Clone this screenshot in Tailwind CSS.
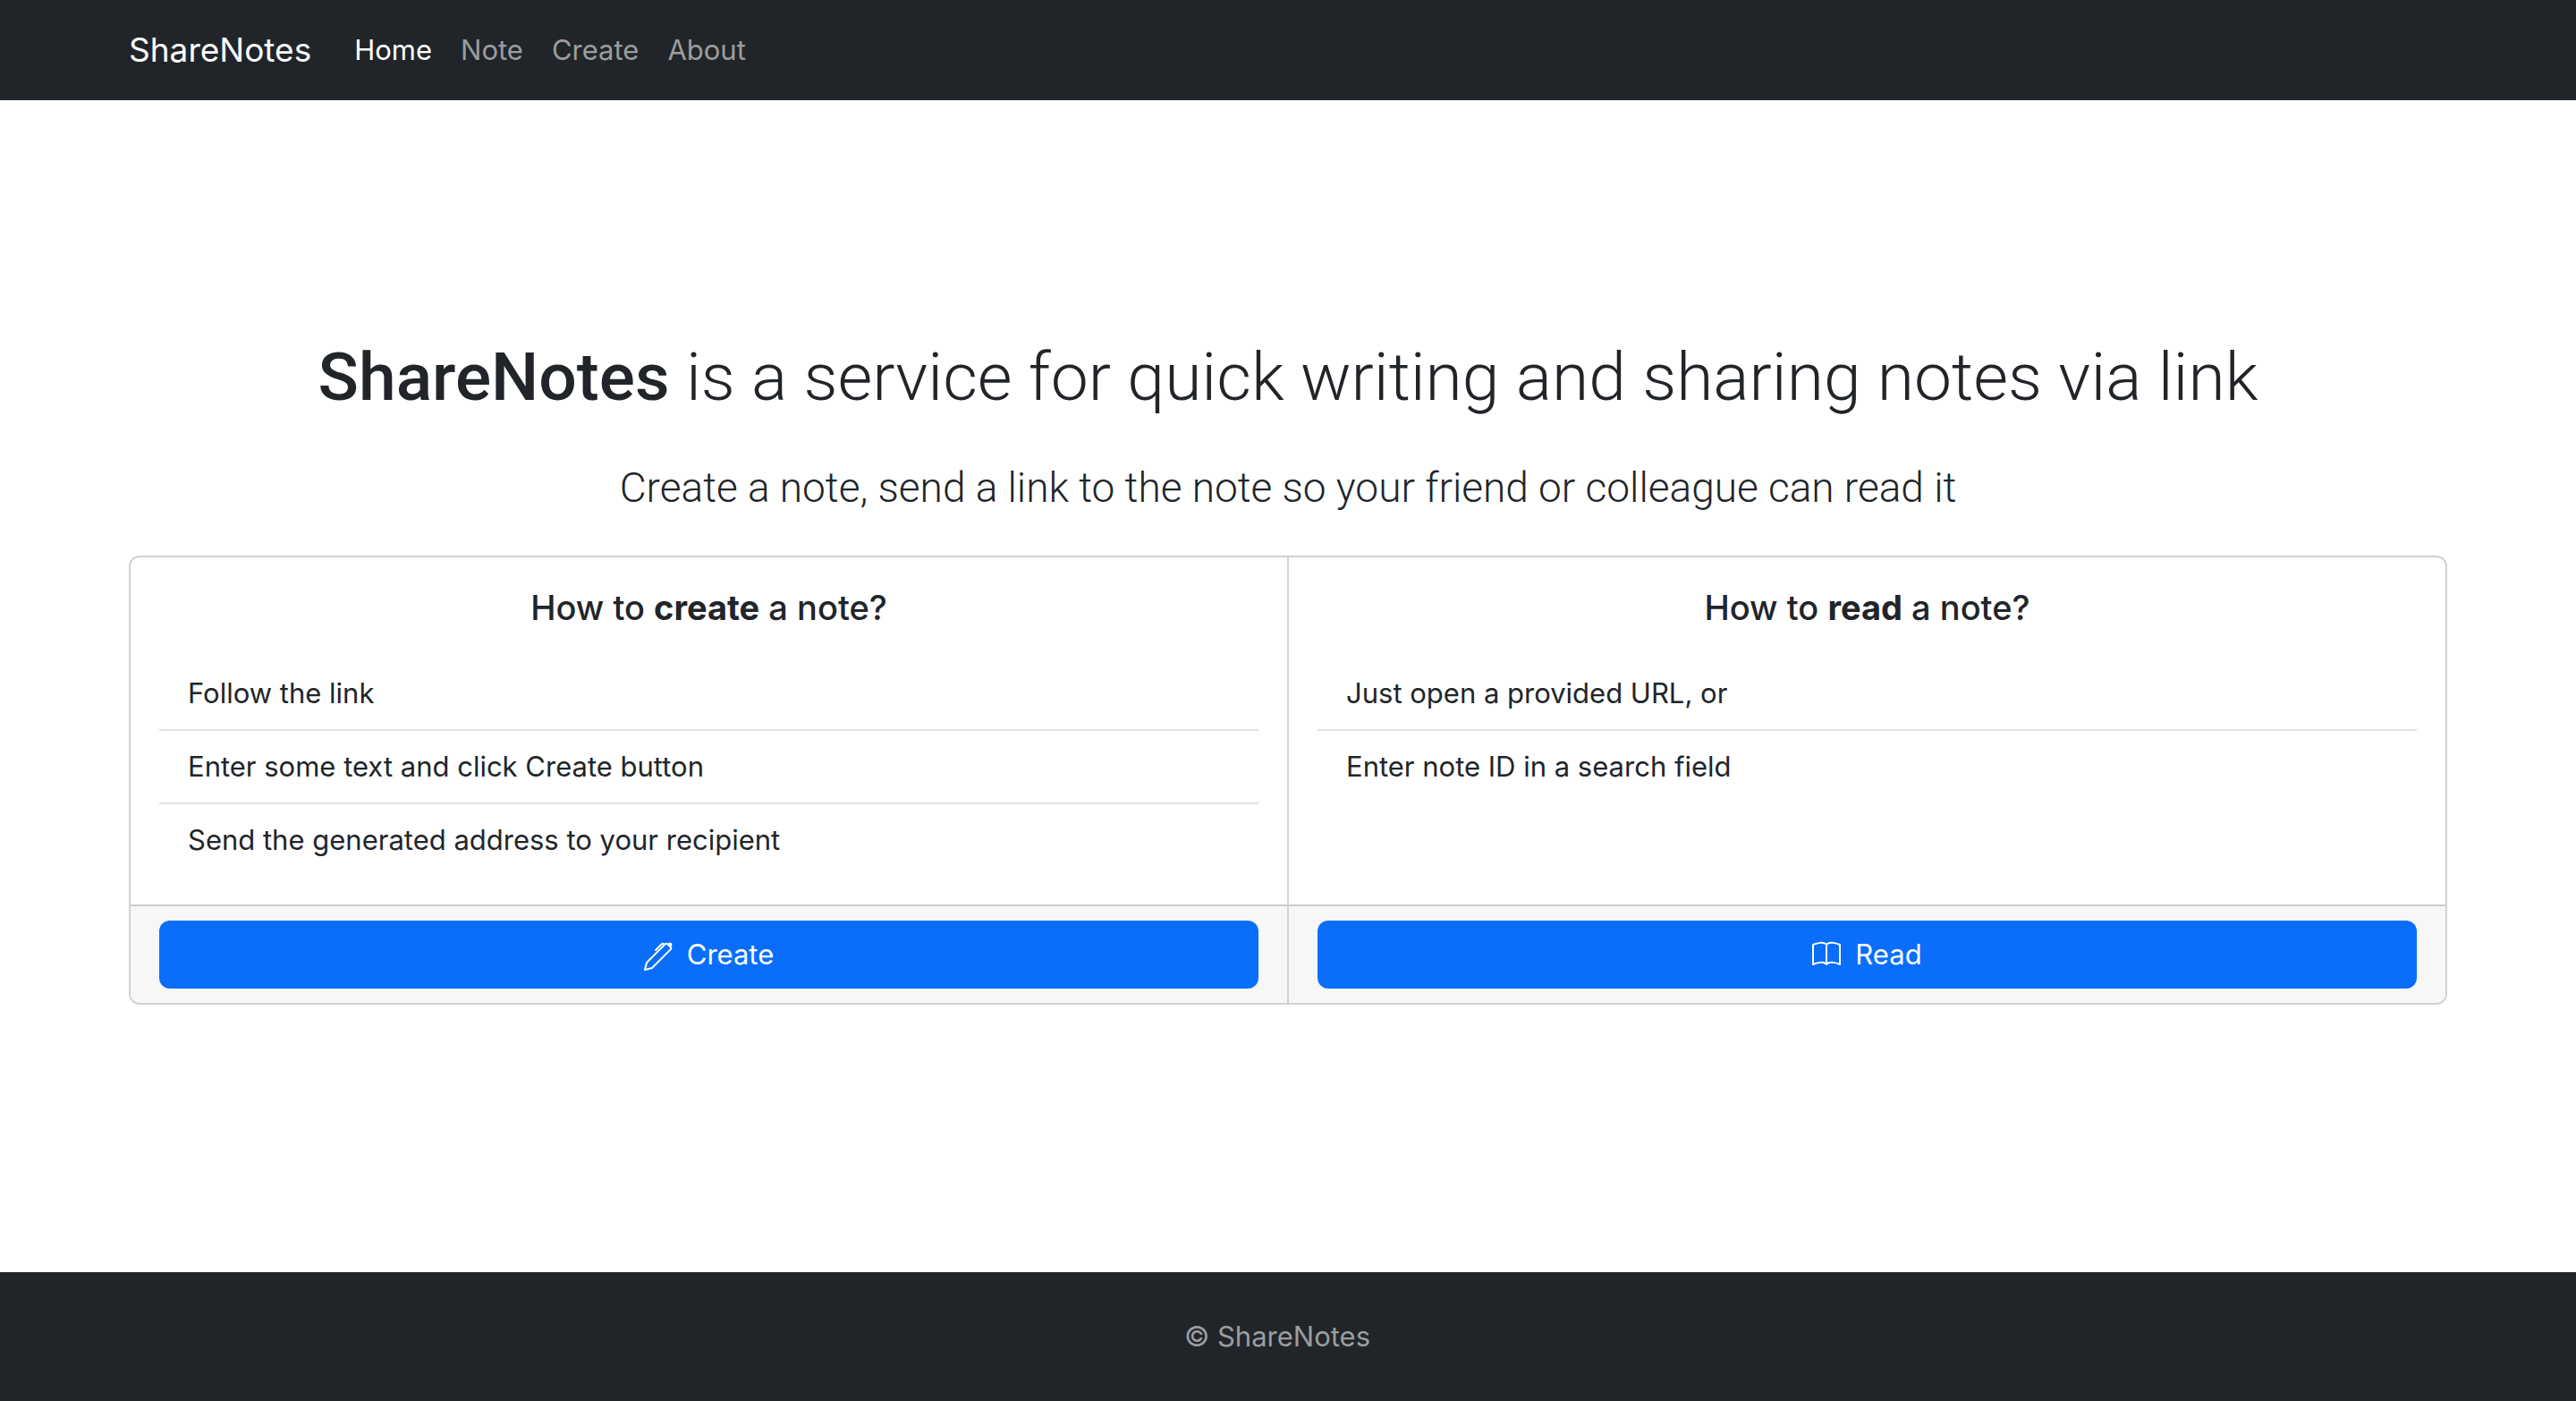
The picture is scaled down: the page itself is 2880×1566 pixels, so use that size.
<!DOCTYPE html>
<html lang="en">
<head>
<meta charset="utf-8">
<meta name="viewport" content="width=device-width, initial-scale=1">
<title>ShareNotes</title>
<script src="https://cdn.jsdelivr.net/npm/@tailwindcss/browser@4"></script>
</head>
<body class="flex min-h-screen flex-col bg-white font-['Inter',sans-serif] text-[31px] leading-[48px] text-[#212529]">

<header class="bg-[#212529] px-36">
  <nav class="flex min-h-28 items-center gap-8" aria-label="Main">
    <a href="#" class="text-[37px] text-white">ShareNotes</a>
    <ul class="flex items-center text-[#9b9d9e]">
      <li><a href="#" class="block px-4 text-white" aria-current="page">Home</a></li>
      <li><a href="#" class="block px-4">Note</a></li>
      <li><a href="#" class="block px-4">Create</a></li>
      <li><a href="#" class="block px-4">About</a></li>
    </ul>
  </nav>
</header>

<main class="flex flex-1 flex-col justify-center px-36">
  <h1 class="mb-12 text-center font-['Roboto',sans-serif] text-[75px] leading-[96px] font-light"><span class="font-medium">ShareNotes</span> is a service for quick writing and sharing notes via link</h1>
  <p class="mb-12 text-center font-['Roboto',sans-serif] text-[46px] leading-[56px] font-light">Create a note, send a link to the note so your friend or colleague can read it</p>

  <div class="mb-[38px] flex divide-x-2 divide-[#d2d2d2] overflow-hidden rounded-xl border-2 border-[#d2d2d2]">
    <section class="flex flex-1 flex-col">
      <div class="flex-1 p-8">
        <h2 class="mb-8 text-center text-[38px] font-medium">How to <b class="font-bold">create</b> a note?</h2>
        <ul class="divide-y-2 divide-[#dee2e6]">
          <li class="px-8 py-4">Follow the link</li>
          <li class="px-8 py-4">Enter some text and click Create button</li>
          <li class="px-8 py-4">Send the generated address to your recipient</li>
        </ul>
      </div>
      <div class="border-t-2 border-[#cccccc] bg-[#f7f7f7] px-8 py-4">
        <button type="button" class="flex h-[76px] w-full items-center justify-center gap-4 rounded-xl bg-[#0a6efa] text-white">
          <svg class="size-8 overflow-visible" viewBox="0 -1 16 16" fill="currentColor" aria-hidden="true"><path d="m13.498.795.149-.149a1.207 1.207 0 1 1 1.707 1.708l-.149.148a1.5 1.5 0 0 1-.059 2.059L4.854 14.854a.5.5 0 0 1-.233.131l-4 1a.5.5 0 0 1-.606-.606l1-4a.5.5 0 0 1 .131-.232l9.642-9.642a.5.5 0 0 0-.642.056L6.854 4.854a.5.5 0 1 1-.708-.708L9.44.854A1.5 1.5 0 0 1 11.5.796a1.5 1.5 0 0 1 1.998-.001zm-.644.766a.5.5 0 0 0-.707 0L1.95 11.756l-.764 3.057 3.057-.764L14.44 3.854a.5.5 0 0 0 0-.708l-1.585-1.585z"/></svg>
          Create
        </button>
      </div>
    </section>
    <section class="flex flex-1 flex-col">
      <div class="flex-1 p-8">
        <h2 class="mb-8 text-center text-[38px] font-medium">How to <b class="font-bold">read</b> a note?</h2>
        <ul class="divide-y-2 divide-[#dee2e6]">
          <li class="px-8 py-4">Just open a provided URL, or</li>
          <li class="px-8 py-4">Enter note ID in a search field</li>
        </ul>
      </div>
      <div class="border-t-2 border-[#cccccc] bg-[#f7f7f7] px-8 py-4">
        <button type="button" class="flex h-[76px] w-full items-center justify-center gap-4 rounded-xl bg-[#0a6efa] text-white">
          <svg class="size-8" viewBox="0 0 16 16" fill="currentColor" aria-hidden="true"><path d="M1 2.828c.885-.37 2.154-.769 3.388-.893 1.33-.134 2.458.063 3.112.752v9.746c-.935-.53-2.12-.603-3.213-.493-1.18.12-2.37.461-3.287.811V2.828zm7.5-.141c.654-.689 1.782-.886 3.112-.752 1.234.124 2.503.523 3.388.893v9.923c-.918-.35-2.107-.692-3.287-.81-1.094-.111-2.278-.039-3.213.492V2.687zM8 1.783C7.015.936 5.587.81 4.287.94c-1.514.153-3.042.672-3.994 1.105A.5.5 0 0 0 0 2.5v11a.5.5 0 0 0 .707.455c.882-.4 2.303-.881 3.68-1.02 1.409-.142 2.59.087 3.223.877a.5.5 0 0 0 .78 0c.633-.79 1.814-1.019 3.222-.877 1.378.139 2.8.62 3.681 1.02A.5.5 0 0 0 16 13.5v-11a.5.5 0 0 0-.293-.455c-.952-.433-2.48-.952-3.994-1.105C10.413.809 8.985.936 8 1.783z"/></svg>
          Read
        </button>
      </div>
    </section>
  </div>
</main>

<footer class="bg-[#212529] py-12 pr-6 text-center text-[#9b9d9e]">© ShareNotes</footer>

</body>
</html>
